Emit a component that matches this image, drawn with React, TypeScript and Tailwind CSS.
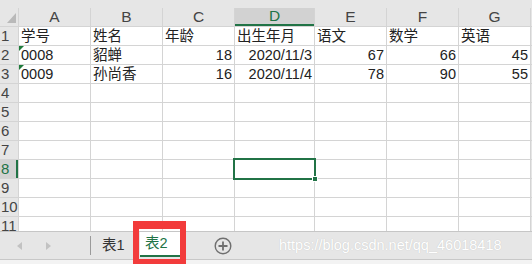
import React from "react";

const cols = ["A", "B", "C", "D", "E", "F", "G"];

type Cell = { v: string; right?: boolean; flag?: boolean };

const data: Cell[][] = [
  [{ v: "学号" }, { v: "姓名" }, { v: "年龄" }, { v: "出生年月" }, { v: "语文" }, { v: "数学" }, { v: "英语" }],
  [
    { v: "0008", flag: true },
    { v: "貂蝉" },
    { v: "18", right: true },
    { v: "2020/11/3", right: true },
    { v: "67", right: true },
    { v: "66", right: true },
    { v: "45", right: true },
  ],
  [
    { v: "0009", flag: true },
    { v: "孙尚香" },
    { v: "16", right: true },
    { v: "2020/11/4", right: true },
    { v: "78", right: true },
    { v: "90", right: true },
    { v: "55", right: true },
  ],
];

export default function App() {
  const rows = Array.from({ length: 11 }, (_, i) => i + 1);

  return (
    <div className="relative flex h-[264px] w-[532px] flex-col overflow-hidden bg-[#e6e6e6] font-['Liberation_Sans','Noto_Sans_CJK_SC',sans-serif] text-[14.5px] text-[#222]">
      <div className="h-[8px] shrink-0 bg-[#e6e6e6]" />

      <div className="h-[223px] shrink-0 overflow-hidden">
        <div className="grid grid-cols-[18px_71px_71px_71px_79px_71px_71px_71px_1fr] grid-rows-[18px] auto-rows-[18px] gap-px bg-[#d4d4d4]">
          {/* corner */}
          <div className="flex items-end justify-end bg-[#e6e6e6] pb-[3px] pr-[2px]">
            <svg width="9" height="10" viewBox="0 0 9 10">
              <polygon points="9,0 9,10 0,10" fill="#b9b9b9" />
            </svg>
          </div>
          {cols.map((c) => (
            <div
              key={c}
              className={
                c === "D"
                  ? "flex items-center justify-center border-b-2 border-[#217346] bg-[#d2d2d2] text-[15.5px] leading-[18px] text-[#217346]"
                  : "flex items-center justify-center bg-[#e6e6e6] text-[15.5px] leading-[18px] text-[#444]"
              }
            >
              {c}
            </div>
          ))}
          <div className="bg-[#e6e6e6]" />

          {rows.map((r) => (
            <React.Fragment key={r}>
              <div
                className={
                  r === 8
                    ? "border-r-2 border-[#217346] bg-[#d2d2d2] pl-[1px] text-[15px] leading-[18px] text-[#217346]"
                    : "bg-[#e6e6e6] pl-[1px] text-[15px] leading-[18px] text-[#444]"
                }
              >
                {r}
              </div>
              {cols.map((c, ci) => {
                const cell = data[r - 1]?.[ci];
                const selected = r === 8 && c === "D";
                return (
                  <div
                    key={c}
                    className={
                      "relative overflow-visible whitespace-nowrap bg-white leading-[18px] " +
                      (cell?.right ? "pr-[2px] text-right" : "pl-[2px]")
                    }
                  >
                    {cell?.flag && (
                      <svg className="absolute left-0 top-0" width="5" height="5" viewBox="0 0 5 5">
                        <polygon points="0,0 5,0 0,5" fill="#1e7b3a" />
                      </svg>
                    )}
                    {cell?.v}
                    {selected && (
                      <>
                        <div className="absolute -bottom-[2px] -left-[2px] -right-[2px] -top-[2px] z-10 border-2 border-[#217346]" />
                        <div className="absolute -bottom-[4px] -right-[4px] z-20 h-[6px] w-[6px] border border-white bg-[#217346]" />
                      </>
                    )}
                  </div>
                );
              })}
              <div className="bg-[#e6e6e6]" />
            </React.Fragment>
          ))}
        </div>
      </div>

      {/* sheet tabs */}
      <div className="flex h-[28px] shrink-0 items-center border-t border-[#c6c6c6] bg-[#e6e6e6]">
        <div className="flex w-[90px] items-center pl-[17px]">
          <svg width="5" height="8" viewBox="0 0 5 8">
            <polygon points="5,0 5,8 0,4" fill="#c2c2c2" />
          </svg>
          <svg className="ml-[24px]" width="5" height="8" viewBox="0 0 5 8">
            <polygon points="0,0 0,8 5,4" fill="#c2c2c2" />
          </svg>
        </div>
        <div className="h-[19px] w-px bg-[#9a9a9a]" />
        <div className="w-[49px] pl-[11px] text-[#333]">表1</div>
        <div className="flex h-[25px] w-[40px] items-center self-start border-b-2 border-[#217346] bg-white pl-[5px] text-[#217346]">
          表2
        </div>
        <svg className="ml-[34px]" width="18" height="18" viewBox="0 0 18 18">
          <circle cx="9" cy="9" r="7.8" fill="none" stroke="#6f6f6f" strokeWidth="1.4" />
          <path d="M9 4.5v9M4.5 9h9" stroke="#6f6f6f" strokeWidth="1.8" />
        </svg>
        <span className="ml-[47px] text-[14.5px] text-white [text-shadow:0_0_1px_rgba(0,0,0,0.18)]">
          https://blog.csdn.net/qq_46018418
        </span>
      </div>
      <div className="flex-1 border-t border-[#c8c8c8] bg-[#f3f3f3]" />

      {/* highlight box */}
      <div className="absolute left-[133px] top-[221px] h-[45px] w-[53px] border-x-[6px] border-b-[7px] border-t-[8px] border-[#f23b3b]" />
    </div>
  );
}
